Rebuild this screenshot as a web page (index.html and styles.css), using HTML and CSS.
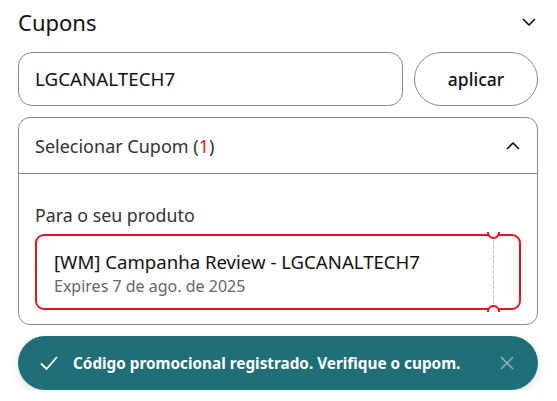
FILE: index.html
```html
<!DOCTYPE html>
<html lang="pt-BR">
<head>
  <meta charset="UTF-8">
  <meta name="viewport" content="width=device-width, initial-scale=1.0">
  <title>Cupons</title>
  <link rel="stylesheet" href="styles.css">
</head>
<body>
  <div class="coupons">
    <div class="coupons-head">
      <h2>Cupons</h2>
      <svg class="chev" width="14" height="8" viewBox="0 0 14 8"><path d="M1 1l6 6 6-6" fill="none" stroke="#111" stroke-width="1.6"/></svg>
    </div>

    <div class="apply-row">
      <input type="text" class="code-input" value="LGCANALTECH7">
      <button class="apply-btn">aplicar</button>
    </div>

    <div class="select-box">
      <div class="select-head">
        <span>Selecionar Cupom (<em>1</em>)</span>
        <svg width="14" height="8" viewBox="0 0 14 8"><path d="M1 7l6-6 6 6" fill="none" stroke="#111" stroke-width="1.6"/></svg>
      </div>
      <div class="select-body">
        <p class="label">Para o seu produto</p>
        <div class="coupon">
          <div class="coupon-main">
            <div class="coupon-title">[WM] Campanha Review - LGCANALTECH7</div>
            <div class="coupon-exp">Expires 7 de ago. de 2025</div>
          </div>
          <div class="coupon-stub"></div>
        </div>
      </div>
    </div>

    <div class="toast">
      <svg width="20" height="16" viewBox="0 0 20 16"><path d="M2 8.5l5.5 5.5L18 2" fill="none" stroke="#fff" stroke-width="1.8"/></svg>
      <span class="toast-text">Código promocional registrado. Verifique o cupom.</span>
      <svg class="toast-close" width="14" height="14" viewBox="0 0 14 14"><path d="M1 1l12 12M13 1L1 13" stroke="#8fb7ba" stroke-width="1.5"/></svg>
    </div>
  </div>
</body>
</html>
```

FILE: styles.css
```css
body {
  margin: 0;
  font-family: "Noto Sans", "Open Sans", sans-serif;
  background: #fff;
  color: #111;
}
.coupons {
  padding: 0 19px 0 18px;
}
.coupons-head {
  display: flex;
  justify-content: space-between;
  align-items: center;
  height: 44px;
}
.coupons-head h2 {
  margin: 0;
  font-size: 22px;
  font-weight: 400;
}
.chev {
  margin-right: 2px;
}
.apply-row {
  display: flex;
  gap: 11px;
  margin-top: 8px;
}
.code-input {
  flex: 1;
  height: 54px;
  box-sizing: border-box;
  border: 1px solid #8a8a8a;
  border-radius: 14px;
  padding: 0 16px;
  font-family: inherit;
  font-size: 18.8px;
  color: #111;
}
.apply-btn {
  width: 124px;
  height: 54px;
  border: 1px solid #8a8a8a;
  border-radius: 27px;
  background: #fff;
  font-family: inherit;
  font-size: 17.5px;
  font-weight: 500;
  color: #111;
}
.select-box {
  margin-top: 11px;
  border: 1px solid #8a8a8a;
  border-radius: 12px;
}
.select-head {
  display: flex;
  justify-content: space-between;
  align-items: center;
  height: 55px;
  padding: 0 17px 0 16px;
  border-bottom: 1px solid #8a8a8a;
  font-size: 18px;
  color: #333;
}
.select-head em {
  font-style: normal;
  color: #e5141f;
}
.select-body {
  padding: 29px 16px 14px;
}
.label {
  margin: 0 0 7px;
  font-size: 17.8px;
  line-height: 24px;
  color: #333;
}
.coupon {
  position: relative;
  display: flex;
  border: 2px solid #e5141f;
  border-radius: 9px;
  height: 72px;
}
.coupon-main {
  flex: 1;
  padding: 13px 17px 0;
}
.coupon-title {
  font-size: 18.6px;
  line-height: 26px;
  color: #111;
}
.coupon-exp {
  font-size: 16px;
  line-height: 22px;
  color: #666;
}
.coupon-stub {
  position: relative;
  width: 25px;
  border-left: 1px dashed #bbb;
  margin: 4px 0;
}
.coupon-stub::before,
.coupon-stub::after {
  content: "";
  position: absolute;
  left: -7px;
  width: 9px;
  height: 5px;
  background: #fff;
  border: 2px solid #e5141f;
}
.coupon-stub::before {
  top: -8px;
  border-top: none;
  border-radius: 0 0 7px 7px;
}
.coupon-stub::after {
  bottom: -8px;
  border-bottom: none;
  border-radius: 7px 7px 0 0;
}
.toast {
  display: flex;
  align-items: center;
  gap: 14px;
  margin-top: 11px;
  height: 54px;
  padding: 0 24px 0 21px;
  background: #1f7076;
  border-radius: 27px;
  box-shadow: 0 4px 10px rgba(0,0,0,0.12);
  color: #fff;
}
.toast-text {
  flex: 1;
  font-size: 15.3px;
  font-weight: 700;
}
```
